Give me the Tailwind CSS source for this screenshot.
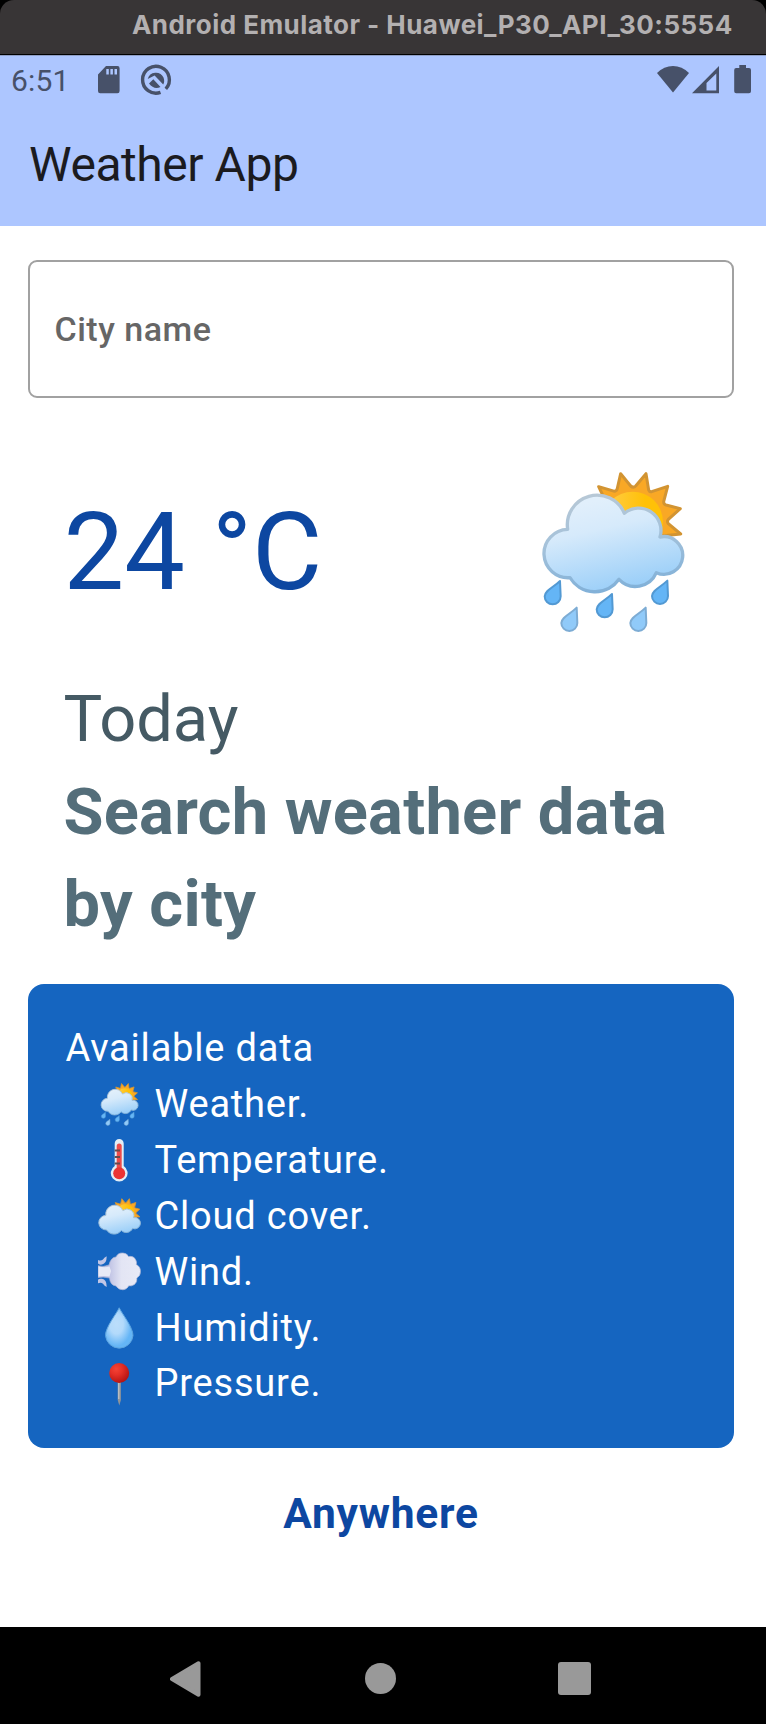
<!DOCTYPE html>
<html lang="en">
<head>
<meta charset="utf-8">
<title>Weather App</title>
<script src="https://cdn.jsdelivr.net/npm/@tailwindcss/browser@4"></script>
</head>
<body class="bg-white">
<!-- Shared icon artwork -->
<svg class="absolute size-0">
  <defs>
    <linearGradient id="cloudFill" gradientUnits="userSpaceOnUse" x1="235" y1="150" x2="300" y2="430">
      <stop offset="0" stop-color="#e1effb"/><stop offset=".3" stop-color="#d6eafb"/><stop offset="1" stop-color="#97cdf8"/>
    </linearGradient>
    <linearGradient id="cloudEdge" gradientUnits="userSpaceOnUse" x1="235" y1="130" x2="270" y2="430">
      <stop offset="0" stop-color="#b7c8d6"/><stop offset=".45" stop-color="#a5c2da"/><stop offset="1" stop-color="#80b0d8"/>
    </linearGradient>
    <linearGradient id="sunFill" x1="0" y1="0" x2="1" y2="0">
      <stop offset="0.2" stop-color="#ffca3a"/><stop offset="0.7" stop-color="#ffc107"/>
    </linearGradient>
    <radialGradient id="dropFill" cx=".4" cy=".4" r=".55">
      <stop offset="0" stop-color="#bbdefb"/><stop offset=".45" stop-color="#b3dafb"/><stop offset="1" stop-color="#64b5f6"/>
    </radialGradient>
    <radialGradient id="pinFill" cx=".35" cy=".3" r=".75">
      <stop offset="0" stop-color="#f44336"/><stop offset=".4" stop-color="#e53027"/><stop offset="1" stop-color="#b01212"/>
    </radialGradient>
    <linearGradient id="windFill" x1="0" y1="0" x2="1" y2="0">
      <stop offset=".25" stop-color="#bfc2e4"/><stop offset=".55" stop-color="#e3e5f4"/><stop offset="1" stop-color="#e8eaf6"/>
    </linearGradient>
    <g id="sunCloud">
      <path d="M236 110 L284 124 Q291 122 292 115 L302 71 L332 108 Q340 115 347 108 L378 71 L386 120 Q388 126 395 125 L443 109 L431 155 Q431 163 438 165 L481 176 L445 208 Q440 215 445 221 L482 252 L425 258 L330 240 L255 150Z" fill="#f9a825" stroke="#d29432" stroke-width="9" stroke-linejoin="round"/>
      <circle cx="338" cy="216" r="91" fill="url(#sunFill)"/>
      <path d="M143 238 A89 89 0 0 1 313 190 A67 67 0 0 1 420 261 A56.500 56.500 0 1 1 409 368 A68 68 0 0 1 297 388 A88 88 0 0 1 150 383 A72.610 72.610 0 1 1 143 238Z" fill="url(#cloudFill)" stroke="url(#cloudEdge)" stroke-width="10" stroke-linejoin="round"/>
    </g>
    <path id="rain" d="M-1 4 L1 50 A24 24 0 0 1 -47 50 C-46 32 -20 23 -1 4Z" stroke-width="6" stroke-linejoin="round"/>
    <g id="rainCloud">
      <use href="#sunCloud"/>
      <g fill="#64b5f6" stroke="#5299d3"><use href="#rain" x="121" y="389"/><use href="#rain" x="277" y="428"/><use href="#rain" x="443" y="388"/></g>
      <g fill="#90caf9" stroke="#7dacd4"><use href="#rain" x="171" y="469"/><use href="#rain" x="378" y="469"/></g>
    </g>
  </defs>
</svg>

<div class="flex h-[1724px] w-[766px] flex-col overflow-hidden font-['Roboto',sans-serif]">
  <!-- Window title bar -->
  <div class="bg-black">
    <div class="h-[55px] rounded-t-[14px] border-b border-black bg-[#383536] pl-[132px] font-['Inter',sans-serif] text-[26px] leading-[49px] font-bold tracking-[0.46px] whitespace-nowrap text-[#b3b0b1]">Android Emulator - Huawei_P30_API_30:5554</div>
  </div>

  <!-- App header -->
  <header class="h-[171px] border-t border-[#8f9fc7] bg-[#adc6ff]">
    <div class="flex h-[48px] text-[#475169]">
      <span class="w-[87px] pt-px pl-[11px] text-[30px] leading-[48px] tracking-[0.2px]">6:51</span>
      <svg class="h-[48px] w-[100px]" viewBox="87 56 100 48" fill="currentColor">
        <path fill-rule="evenodd" d="M106 66H117.500Q119.600 66 119.600 68.200V91Q119.600 93.300 117.400 93.300H100.200Q98 93.300 98 91V74.500ZM106.300 69V74.500H108.800V69ZM110.400 69V74.500H112.900V69ZM114.500 69V74.500H117V69Z"/>
        <path d="M160.500 92.300A13.400 13.400 0 1 1 165.800 88.800" fill="none" stroke="currentColor" stroke-width="3.400"/>
        <path d="M147.700 79A8.500 8.500 0 0 1 163.500 77.500Q165 81.500 163.200 84.500L154.600 75.500ZM149 83.500L153.300 79.300L160.500 87Q154 90 149 83.500Z"/>
      </svg>
      <svg class="ml-auto h-[48px] w-[116px]" viewBox="650 56 116 48" fill="currentColor">
        <path d="M657 73Q664 66 673 66T689 73L673 92.600Z"/>
        <path fill-rule="evenodd" d="M719 66V93.300H692ZM716.300 73.500L706.500 83V90.600H716.300Z"/>
        <path d="M739.300 65H746V68H749Q751 68 751 70V91.300Q751 93.300 749 93.300H736.200Q734.200 93.300 734.200 91.300V70Q734.200 68 736.200 68H739.300Z"/>
      </svg>
    </div>
    <h1 class="pl-[29px] text-[48px] leading-[122px] tracking-[-0.45px] text-[#1b1b1f]">Weather App</h1>
  </header>

  <main class="flex h-[1401px] flex-col pt-[34px] pr-[32px] pl-[28px]">
    <div class="h-[138px] rounded-[9px] border-2 border-[#a1a1a1] pl-[24.5px] text-[34px] leading-[134px] font-medium tracking-[0.5px] text-[#666]">City name</div>

    <section class="mt-[52px] flex h-[223px] justify-between pl-[35.5px]">
      <span class="pt-[39px] text-[108px] leading-[126px] text-[#0d47a1]">24 °C</span>
      <svg class="mr-[24px] h-[200px] w-[190px]" viewBox="0 0 570 600"><use href="#rainCloud"/></svg>
    </section>

    <section class="pl-[35.5px] text-[65px] leading-[92.5px]">
      <p class="text-[#455a64]">Today</p>
      <p class="font-bold tracking-[0.25px] text-[#546e7a]">Search weather data<br>by city</p>
    </section>

    <section class="mt-[33.5px] h-[464px] rounded-[16px] bg-[#1565c0] pt-[37px] pl-[37.5px] text-[38px] leading-[55.9px] tracking-[0.8px] text-white">
      <p>Available data</p>
      <ul class="pl-[32.5px]">
        <li class="flex items-center gap-[13.5px]"><svg class="size-[43px]" viewBox="37 65 484 484"><use href="#rainCloud"/></svg>Weather.</li>
        <li class="flex items-center gap-[13.5px]">
          <svg class="size-[43px]" viewBox="0 0 43 43">
            <path d="M16.700 27V4.500A4.500 4.500 0 0 1 25.700 4.500V27A8.400 8.400 0 1 1 16.700 27Z" fill="#e3eef5"/>
            <path d="M21.200 7V34" stroke="#ee4b4b" stroke-width="5" stroke-linecap="round"/>
            <circle cx="21.200" cy="34.300" r="6" fill="#ea3434"/>
            <path d="M16.700 11.500H22M16.700 18H22M16.700 24.500H22" stroke="#684a4e" stroke-width="1.800"/>
          </svg>Temperature.</li>
        <li class="flex items-center gap-[13.5px]"><svg class="size-[43px]" viewBox="64 34 430 430"><use href="#sunCloud"/></svg>Cloud cover.</li>
        <li class="flex items-center gap-[13.5px]">
          <svg class="size-[43px]" viewBox="0 0 43 43">
            <path d="M0 14.800Q5 16.500 11 14Q13 6 18 6Q20 1.500 25 2Q29 2 30.500 5.500Q36 4.500 38 9.500Q39 11.500 38.300 13.500Q42.500 15.500 42.500 20.500Q42.500 25 38.800 27Q39.500 31 36.500 33.500Q33.500 35.500 30.800 34.800Q29 38.500 25 38.800Q20.500 39 18 35Q12 34 11.500 27Q5 25.500 0 26.500Z" fill="url(#windFill)" stroke="#a9b3d6" stroke-width=".7"/>
            <path d="M.5 15.500Q7 17 11.500 15.500L13 20L11.500 25.500Q6 24.500 .5 25.500Z" fill="#e8eaf6"/>
            <path d="M8.600 5.300Q9 12.500 4 13.500Q1 14 0 12.500V9Q3 10.300 5 8.500Q6 6.500 8.600 5.300ZM8.600 36Q9 29 4 27.800Q1 27.300 0 28.800V32.300Q3 31 5 32.800Q6 34.800 8.600 36Z" fill="#c1c6e6"/>
          </svg>Wind.</li>
        <li class="flex items-center gap-[13.5px]">
          <svg class="size-[43px]" viewBox="0 0 43 43"><path d="M21.200 .8C23.500 6 35 20 35 28.500A13.800 13.800 0 0 1 7.500 28.500C7.500 20 19 6 21.200 .8Z" fill="url(#dropFill)" stroke="#5ca3de"/></svg>Humidity.</li>
        <li class="flex items-center gap-[13.5px]">
          <svg class="size-[43px]" viewBox="0 0 43 43"><path d="M19.700 18H22.900V37L21.300 42.500L19.700 37Z" fill="#8f9499"/><path d="M20.800 20V36" stroke="#c9cdd0"/><circle cx="21.200" cy="10" r="10" fill="url(#pinFill)"/></svg>Pressure.</li>
      </ul>
    </section>

    <p class="mt-[40.5px] text-center text-[42.5px] leading-[50px] font-bold tracking-[0.8px] text-[#0d47a1]">Anywhere</p>
  </main>

  <!-- System navigation -->
  <nav class="flex h-[97px] items-center justify-between bg-black pt-[6px] pr-[175px] pl-[170px]">
    <svg class="h-[36px] w-[31px]" viewBox="0 0 31 36"><path d="M2 18L28.500 2.300V33.700Z" fill="#999" stroke="#999" stroke-width="4" stroke-linejoin="round"/></svg>
    <span class="ml-[2.5px] size-[31px] rounded-full bg-[#999]"></span>
    <span class="size-[33px] rounded-[3px] bg-[#999]"></span>
  </nav>
</div>
</body>
</html>
